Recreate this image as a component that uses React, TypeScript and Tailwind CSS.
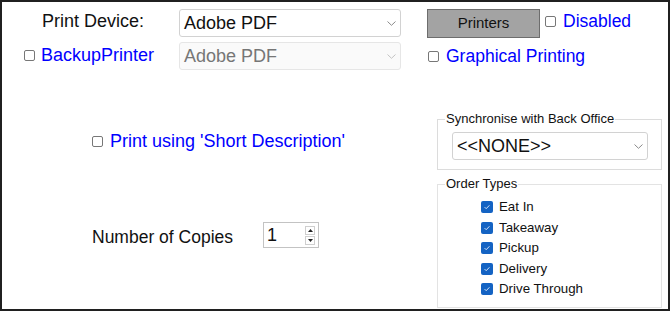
import React from "react";

const Box = ({ className = "" }: { className?: string }) => (
  <span className={"inline-block w-[11px] h-[11px] border border-[#777777] rounded-[2px] bg-white shrink-0 " + className} />
);

const Checked = () => (
  <span className="w-[12px] h-[12px] rounded-[2px] bg-[#1463c3] flex items-center justify-center shrink-0">
    <svg width="8" height="8" viewBox="0 0 8 8">
      <path d="M1.6 4.1 L3.2 5.7 L6.4 2.3" stroke="#d6e4f7" strokeWidth="1" fill="none" />
    </svg>
  </span>
);

const Chevron = ({ color = "#8a8a8a", w = 9 }: { color?: string; w?: number }) => (
  <svg width={w} height="5" viewBox={`0 0 ${w} 5`}>
    <path d={`M0.5 0.5 L${w / 2} 4.3 L${w - 0.5} 0.5`} stroke={color} strokeWidth="1" fill="none" />
  </svg>
);

const Sel = ({
  text,
  disabled = false,
  className = "",
}: {
  text: string;
  disabled?: boolean;
  className?: string;
}) => (
  <div
    className={
      "h-[28px] flex items-center justify-between rounded-[3px] border pl-[4px] pr-[4px] shrink-0 " +
      (disabled ? "border-[#e6e6e6] bg-[#fafafa] text-[#767676]" : "border-[#d2d2d2] bg-white text-[#111]") +
      " " +
      className
    }
  >
    <span className="text-[18px] leading-[20px]">{text}</span>
    <Chevron color={disabled ? "#c4c4c4" : "#8a8a8a"} />
  </div>
);

const orders = ["Eat In", "Takeaway", "Pickup", "Delivery", "Drive Through"];

export default function App() {
  return (
    <div
      className="w-[670px] h-[311px] border-2 border-[#202020] bg-white text-[#111] overflow-hidden"
      style={{ fontFamily: "'Liberation Sans', Arial, sans-serif" }}
    >
      {/* Row 1 */}
      <div className="flex items-center h-[28px] mt-[7px]">
        <span className="ml-[40px] w-[137px] text-[18px] leading-[20px] -mt-[4px]">Print Device:</span>
        <Sel text="Adobe PDF" className="w-[222px]" />
        <button className="ml-[26px] w-[113px] h-[29px] bg-[#a3a3a3] border border-[#6d6d6d] text-[15px] leading-[18px] text-[#111]">
          Printers
        </button>
        <Box className="ml-[5px] -mt-[4px]" />
        <span className="ml-[7px] text-[17.5px] leading-[20px] text-[#0000ff] -mt-[4px]">Disabled</span>
      </div>

      {/* Row 2 */}
      <div className="flex items-center h-[28px] mt-[5px]">
        <Box className="ml-[22px] -mt-[2px]" />
        <span className="ml-[6px] w-[138px] text-[18px] leading-[20px] text-[#0000ff] -mt-[3px]">BackupPrinter</span>
        <Sel text="Adobe PDF" disabled className="w-[222px]" />
        <Box className="ml-[27px]" />
        <span className="ml-[7px] text-[17.5px] leading-[20px] text-[#0000ff]">Graphical Printing</span>
      </div>

      {/* Lower */}
      <div className="flex">
        <div className="w-[435px]">
          <div className="flex items-center h-[20px] mt-[61px] pl-[90px]">
            <Box className="mt-[1px]" />
            <span className="ml-[7px] text-[18px] leading-[20px] text-[#0000ff]">Print using 'Short Description'</span>
          </div>
          <div className="flex items-center h-[26px] mt-[71px] pl-[90px]">
            <span className="w-[171px] text-[17.5px] leading-[20px] mt-[4px]">Number of Copies</span>
            <div className="w-[56px] h-[26px] border border-[#c3c3c3] bg-white flex items-center justify-between pl-[3px] pr-[3px]">
              <span className="text-[18px] leading-[20px]">1</span>
              <div className="flex flex-col gap-[1px]">
                <div className="w-[10px] h-[9px] border border-[#cfcfcf] flex items-center justify-center">
                  <svg width="5" height="3" viewBox="0 0 5 3">
                    <path d="M0 3 L2.5 0 L5 3 Z" fill="#222" />
                  </svg>
                </div>
                <div className="w-[10px] h-[9px] border border-[#cfcfcf] flex items-center justify-center">
                  <svg width="5" height="3" viewBox="0 0 5 3">
                    <path d="M0 0 L2.5 3 L5 0 Z" fill="#222" />
                  </svg>
                </div>
              </div>
            </div>
          </div>
        </div>

        <div className="w-[225px]">
          <fieldset className="mt-[42px] border border-[#dcdcdc] p-0 m-0">
            <legend className="ml-[7px] px-[1px] text-[13px] leading-[14px] text-[#111]">
              Synchronise with Back Office
            </legend>
            <div className="pl-[14px] pt-[6px] pb-[9px]">
              <Sel text="<<NONE>>" className="w-[196px]" />
            </div>
          </fieldset>
          <fieldset className="mt-[7px] border border-[#e3e3e3] p-0 m-0">
            <legend className="ml-[7px] px-[1px] text-[13px] leading-[14px] text-[#111]">Order Types</legend>
            <div className="pl-[43px] pt-[6px] pb-[7px] flex flex-col">
              {orders.map((o) => (
                <div key={o} className="flex items-center h-[20.5px]">
                  <Checked />
                  <span className="ml-[6px] text-[13.3px] leading-[16px] text-[#111]">{o}</span>
                </div>
              ))}
            </div>
          </fieldset>
        </div>
      </div>
    </div>
  );
}
